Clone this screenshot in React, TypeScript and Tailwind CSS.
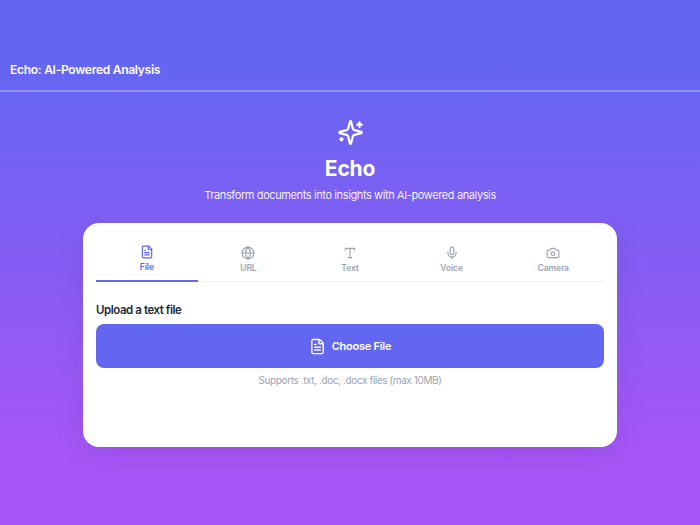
import { FileText, Globe, Type, Mic, Camera } from "lucide-react";

const tabs = [
  { label: "File", Icon: FileText, active: true },
  { label: "URL", Icon: Globe, active: false },
  { label: "Text", Icon: Type, active: false },
  { label: "Voice", Icon: Mic, active: false },
  { label: "Camera", Icon: Camera, active: false },
];

function SparkleIcon() {
  return (
    <svg className="size-[27px] text-white" viewBox="0 0 24 24" fill="none" stroke="currentColor" strokeWidth={2} strokeLinecap="round" strokeLinejoin="round">
      <path d="M9.937 15.5A2 2 0 0 0 8.5 14.063l-6.135-1.582a.5.5 0 0 1 0-.962L8.5 9.936A2 2 0 0 0 9.937 8.5l1.582-6.135a.5.5 0 0 1 .963 0L14.063 8.5A2 2 0 0 0 15.5 9.937l6.135 1.581a.5.5 0 0 1 0 .964L15.5 14.063a2 2 0 0 0-1.437 1.437l-1.582 6.135a.5.5 0 0 1-.963 0z" />
      <path d="M20 3v4" />
      <path d="M22 5h-4" />
      <path d="M4 17v2" />
      <path d="M5 18H3" />
    </svg>
  );
}

export default function App() {
  return (
    <div className="flex h-[525px] w-[700px] flex-col overflow-hidden bg-[linear-gradient(180deg,#6366f1_11%,#a855f7_89%)] font-['Inter',sans-serif]">
      <header className="flex h-[92px] items-end border-b-2 border-white/30 px-[10px] pb-[12px]">
        <h1 className="text-[12px] leading-[17px] font-semibold tracking-[-0.27px] text-white">Echo: AI-Powered Analysis</h1>
      </header>
      <main className="flex flex-col items-center pt-[27px]">
        <SparkleIcon />
        <h2 className="mt-[7px] text-[21px] leading-[32px] font-bold tracking-[-0.2px] text-white">Echo</h2>
        <p className="mt-[2px] text-[11px] leading-[16px] tracking-[-0.39px] text-white/95">Transform documents into insights with AI-powered analysis</p>
        <section className="mt-[20px] h-[224px] w-[534px] rounded-2xl bg-white px-[13px] pt-[13px] shadow-[0_8px_32px_rgba(0,0,0,0.08)]">
          <div className="flex border-b border-[#f0f1f3]">
            {tabs.map(({ label, Icon, active }) => (
              <div
                key={label}
                className={`-mb-px flex h-[46px] flex-1 flex-col items-center border-b-2 ${active ? "border-[#6366f1] pt-[9px] text-[#6366f1]" : "border-transparent pt-[10px] text-[#9ca3af]"}`}
              >
                <Icon className="size-[14px]" strokeWidth={2} />
                <span className="mt-[2px] text-[8.5px] leading-[12px] font-semibold tracking-[-0.1px]">{label}</span>
              </div>
            ))}
          </div>
          <h3 className="mt-[20px] text-[11.5px] leading-[16px] font-semibold tracking-[-0.45px] text-[#1f2937]">Upload a text file</h3>
          <button className="mt-[6px] flex h-[44px] w-full items-center justify-center gap-[6px] rounded-lg bg-[#6366f1] text-[11px] font-semibold tracking-[-0.25px] text-white">
            <FileText className="size-[17px]" />
            <span>Choose File</span>
          </button>
          <p className="mt-[6px] text-center text-[10px] leading-[12px] tracking-[-0.4px] text-[#9ca3af]">Supports .txt, .doc, .docx files (max 10MB)</p>
        </section>
      </main>
    </div>
  );
}
